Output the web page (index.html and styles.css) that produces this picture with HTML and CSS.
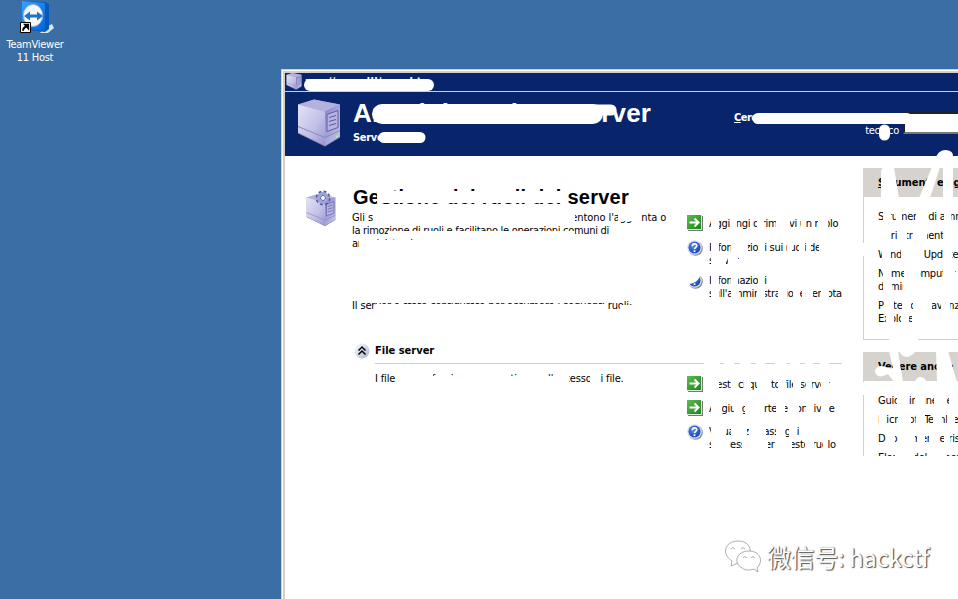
FILE: index.html
```html
<!DOCTYPE html>
<html lang="it">
<head>
<meta charset="utf-8">
<title>Amministrazione server</title>
<link rel="stylesheet" href="styles.css">
</head>
<body>
<svg class="defs" width="0" height="0">
  <defs>
    <linearGradient id="front" x1="0" y1="0" x2="1" y2="1"><stop stop-color="#e4e3f6"/><stop offset=".6" stop-color="#c0bfe6"/><stop offset="1" stop-color="#9795d0"/></linearGradient>
    <linearGradient id="side" x1="0" y1="0" x2="1" y2="1"><stop stop-color="#8583d2"/><stop offset="1" stop-color="#c9c8e6"/></linearGradient>
    <linearGradient id="green" x1="0" y1="0" x2="1" y2="1"><stop stop-color="#61ba57"/><stop offset="1" stop-color="#11840f"/></linearGradient>
    <radialGradient id="blue" cx=".4" cy=".35" r=".65"><stop stop-color="#5a8cf0"/><stop offset="1" stop-color="#1645b5"/></radialGradient>
    <linearGradient id="tv" x1="0" y1="0" x2="1" y2="1"><stop stop-color="#36a2ff"/><stop offset="1" stop-color="#0065da"/></linearGradient>
    <linearGradient id="round" x1="0" y1="0" x2="1" y2="1"><stop stop-color="#fff"/><stop offset="1" stop-color="#a9b4d6"/></linearGradient>
    <symbol id="tower" viewBox="0 0 44 48">
      <path d="M1 5 17 0 43 5 43 38 28 47 1 34z" fill="#8c8ab4"/>
      <path d="M1 5 17 0 43 5 28 12z" fill="#b3b1df"/>
      <path d="M1 5 28 12 28 46 1 33z" fill="url(#front)"/>
      <path d="M28 12 43 5 43 37 28 46z" fill="url(#side)"/>
      <path d="M1 27 28 38 43 31" fill="none" stroke="#8b89b8"/>
      <path d="M30 15 41 11V28L30 32z" fill="#b4b3e1" stroke="#5e5e9f"/>
      <path d="M32 18 39 16M32 22 39 20M32 26 39 24" stroke="#5b5ba0"/>
      <path d="M39 36h2v2h-2z" fill="#8fff77"/>
    </symbol>
    <symbol id="go" viewBox="0 0 16 16">
      <path d="M1 1h15v15H1z" fill="#777"/><path d="M0 0h15v15H0z" fill="url(#green)"/><path d="M14.5 0v14.5H0" fill="none" stroke="#dfe9dc"/>
      <path d="M2.5 7.5h9M7.5 3.5l4 4-4 4" fill="none" stroke="#fff" stroke-width="2"/>
    </symbol>
    <symbol id="help" viewBox="0 0 16 16">
      <circle cx="8.5" cy="8.5" r="7.3" fill="#88898f"/><circle cx="7.5" cy="7.5" r="7.3" fill="#d7e1f5"/><circle cx="7.5" cy="7.5" r="6" fill="url(#blue)"/>
      <path d="M5.3 6.2C5.3 3 10 3.2 9.8 5.8 9.7 7.4 7.6 7.3 7.5 9.1" fill="none" stroke="#fff" stroke-width="1.7"/><path d="M6.6 10.3h1.8v1.8H6.6z" fill="#fff"/>
    </symbol>
  </defs>
</svg>
<div class="desktop">
  <div class="shortcut">
    <svg width="34" height="34" viewBox="0 0 34 34">
      <path d="M24 28 32 24 34 28 28 33 20 33z" fill="#dce4ee"/>
      <path d="M2 2 5 1 25 2 29 4V29L25 32 2 29z" fill="#0658bd"/>
      <path d="M2 1 25 3V31L2 28z" fill="url(#tv)"/>
      <ellipse cx="13" cy="15.5" rx="9.7" ry="11" fill="#f4f8fc" stroke="#9bb7ce"/>
      <path d="M4 16 10 11.5V14.5H17V11.5L23 16 17 20.5V17.5H10V20.5z" fill="#1f72c7"/>
      <path d="M.5 22.500h10v10H.5z" fill="#fff" stroke="#000"/>
      <path d="M3 31C2.500 28 4 26.500 7 26.500M4.500 24.500H8.500V29z" fill="#000" stroke="#000" stroke-width="1.300"/>
    </svg>
    <span>TeamViewer<br>11 Host</span>
  </div>

  <main class="window">
    <div class="titlebar"><svg width="16" height="17"><use href="#tower"/></svg><span>res://mys.dll/mys.hta</span></div>
    <header class="banner">
      <svg width="44" height="49"><use href="#tower"/></svg>
      <div class="heading"><h1>Amministrazione server</h1><p>Server: PC1</p></div>
      <div class="search"><label><b><u>C</u>erca in Guida in linea e supporto</b>tecnico</label><input></div>
    </header>
    <div class="content">
      <section class="roles">
        <svg class="roles-icon" width="32" height="38" viewBox="0 0 32 38">
          <svg y="3" width="30" height="35" preserveAspectRatio="none"><use href="#tower"/></svg>
          <circle cx="17" cy="8" r="5" fill="none" stroke="#555d9d" stroke-width="5" stroke-dasharray="2.2 1.7"/><circle cx="17" cy="8" r="4.500" fill="#f4f4ff" stroke="#9ba3dc" stroke-width="3"/><circle cx="17" cy="8" r="2.500" fill="#fff" stroke="#565e9c"/>
        </svg>
        <div class="roles-text">
          <h2>Gestione dei ruoli del server</h2>
          <p class="l1">Gli strumenti e le informazioni seguenti consentono l'aggiunta o</p>
          <p class="l2">la rimozione di ruoli e facilitano le operazioni comuni di</p>
          <p>amministrazione.</p>
          <p class="configured">Il server è stato configurato per assumere i seguenti ruoli:</p>
        </div>
        <ul class="links">
          <li><svg><use href="#go"/></svg><span>Aggiungi o rimuovi un ruolo</span></li>
          <li class="two"><svg><use href="#help"/></svg><span>Informazioni sui ruoli del<br>server</span></li>
          <li class="two last"><svg><use href="#help"/></svg><span>Informazioni<br>sull'amministrazione remota</span></li>
        </ul>
      </section>
      <section class="file">
        <h3><svg width="16" height="16"><circle cx="8" cy="8" r="7.500" fill="url(#round)"/><path d="M4.500 7.500 8 4l3.500 3.500M4.500 11.500 8 8l3.500 3.500" fill="none" stroke="#000" stroke-width="1.500"/></svg><span>File server</span></h3>
        <div class="file-body">
          <p>I file server forniscono e gestiscono l'accesso ai file.</p>
          <ul class="links">
            <li><svg><use href="#go"/></svg><span>Gestisci questo file server</span></li>
            <li><svg><use href="#go"/></svg><span>Aggiungi cartelle condivise</span></li>
            <li class="two"><svg><use href="#help"/></svg><span>Visualizza passaggi<br>successivi per questo ruolo</span></li>
          </ul>
        </div>
      </section>
      <aside class="side">
        <section class="panel tools">
          <h4><u>S</u>trumenti e aggiornamenti</h4>
          <ul><li>Strumenti di amministrazione</li><li>Altri strumenti</li><li>Windows Update</li><li>Nome computer e<br>dominio</li><li>Protezione avanzata<br>Explorer</li></ul>
        </section>
        <section class="panel also">
          <h4><u>V</u>edere anche</h4>
          <ul><li>Guida in linea e</li><li>Microsoft TechNet</li><li>Deployment e risorse</li><li>Elenco delle operazioni</li></ul>
        </section>
      </aside>
    </div>
  </main>

  <!-- White brush strokes painted over the window -->
  <svg class="brush" width="958" height="599" viewBox="0 0 958 599">
    <g class="halo">
      <path stroke-width="12" d="M310 85H428"/><path stroke-width="11" d="M384 137.500H420"/>
      <path stroke-width="20" d="M382 114H593"/><path stroke-width="11" d="M590 110H611"/>
      <path stroke-width="11" d="M758 118.500H907"/><path stroke-width="11" d="M884.500 130V135"/>
    </g>
    <g class="rows">
      <path d="M711 223H719M730 223H737M757 223H764M776 223H790M801 223H806M812 223H815M818 223H828"/>
      <path d="M711 247H719M731 247H748M758 247H765M787 247H792M799 247H805M807 247H811M819 247H833"/>
      <path d="M711 262H726M728 262H738M740 262H760"/>
      <path d="M711 279H719M731 279H738M758 279H764"/>
      <path d="M711 293H719M731 293H739M757 293H765M778 293H787M793 293H800M802 293H805M808 293H813M821 293H829"/>
      <path d="M704 364H720M724 364H734M740 364H751M756 364H765M775 364H787M790 364H800M805 364H813M820 364H829"/>
      <path d="M706 384H719M731 384H738M744 384H751M757 384H771M778 384H786M793 384H801M806 384H812M821 384H829"/>
      <path d="M711 408H722M734 408H742M745 408H764M776 408H785M788 408H799M806 408H814M821 408H829"/>
      <path d="M711 432H726M731 432H747M749 432H766M776 432H785M789 432H797M805 432H820"/>
      <path d="M711 445H730M742 445H768M776 445H792M805 445H814M823 445H828"/>
      <path d="M883 216H891M896 216H902M916 216H927M944 216H951"/>
      <path d="M876 235H891M897 235H907M913 235H927M943 235H951"/>
      <path d="M882 254H891M901 254H923M943 254H952"/>
      <path d="M883 272H891M904 272H920M943 272H955"/>
      <path d="M883 286H892M903 286H925"/>
      <path d="M884 304H894M902 304H911M913 304H932M941 304H950"/>
      <path d="M886 318H894M901 318H909M912 318H930"/>
      <path d="M897 400H908M915 400H925M934 400H944M949 400H958"/>
      <path d="M879 419H886M898 419H911M916 419H925M933 419H942M947 419H955"/>
      <path d="M886 438H895M898 438H915M917 438H925M929 438H939M944 438H950"/>
      <path d="M895 454H915M928 454H936M939 454H947"/>
    </g>
    <g class="solid">
      <path d="M377 191H562V203H377zM373 209H575V223H373zM618 209H641V221H618zM388 231H575V238H388zM359 240H450V252H359z"/>
      <path d="M376 297H606V303H376zM376 304H606V313H376zM622 305H635V312H618z"/>
      <path d="M397 376H568V386H397zM397 370H433V386H397zM457 370H510V386H457zM520 370H547V386H520zM555 370H569V386H555zM590 370H600V386H590z"/>
      <path d="M686 272H706L703 277 700 276Q698 282 690 284L687 286z"/>
      <path d="M881 198V172Q881 167 887 167H894L899 198zM919 198 932 167 937 155Q940 150 946 150 954 151 953 157V198H943V167H940L930 198z"/>
      <path d="M862 243H866V256H862zM862 382H866V395H862z"/>
      <path d="M889 351H898L903 382H894L888 374Q876 380 875 371 877 364 886 367 891 369 893 368z"/>
      <path d="M899 351H916Q911 357 906 357 901 356 899 351zM915 382Q916 377 921 377 926 378 926 382zM936 351H948L957 382H937zM889 338H918V341H889z"/>
    </g>
  </svg>

  <div class="watermark">
    <svg width="38" height="34" viewBox="0 0 38 34" fill="#fff" stroke="#999" stroke-width=".8">
      <path d="M14 23 7 26 8 21C-4 13 2 1 14 1 23 1 27 7 26 12"/>
      <path d="M25 11C12 11 9 23 18 28 22 31 27 30 30 29L34 32 33 28C40 21 36 11 25 11z"/>
      <path d="M7 9q2-3 4 0M17 9q2-3 4 0M19 18q2-3 4 0M27 18q2-3 4 0" fill="none"/>
    </svg>
    <span>微信号: <i>hackctf</i></span>
  </div>
</div>
</body>
</html>
```
FILE: styles.css
```css
* { box-sizing: border-box; }
body { margin: 0; font: 11px/13px "DejaVu Sans Condensed", "DejaVu Sans", sans-serif; font-stretch: condensed; letter-spacing: -0.3px; color: #000; }
h1, h2, h3, h4, p, ul { margin: 0; padding: 0; }
ul { list-style: none; }
svg { display: block; flex: none; }
.defs { position: absolute; }
.desktop { position: relative; display: grid; grid-template-columns: 281px 677px; width: 958px; height: 599px; overflow: hidden; background: #3a6ea5; white-space: nowrap; }
.shortcut { width: 70px; display: flex; flex-direction: column; align-items: center; gap: 4px; color: #fff; text-align: center; letter-spacing: -0.25px; }
.shortcut svg { margin-left: 3px; }
.window { margin-top: 69px; height: 530px; border-left: 1px solid #d4d0c8; border-top: 1px solid #d4d0c8; box-shadow: inset 1px 1px #fff, inset 3px 3px #d4d0c8; padding: 3px 0 0 3px; background: #fff; overflow: hidden; }
.titlebar { display: flex; gap: 3px; height: 19px; padding: 0 1px; background: #08246b; border-bottom: 1px solid #d4d0c8; color: #fff; font-weight: bold; align-items: flex-start; letter-spacing: 0.3px; }
.titlebar span { padding-top: 2px; }
.banner { display: flex; height: 64px; background: #08246b; color: #fff; padding: 7px 0 0 12px; }
.heading { flex: none; width: 380px; padding-left: 12px; }
h1 { font: bold 26px/28px "Liberation Sans", sans-serif; letter-spacing: 0.15px; }
.heading p { font-weight: bold; padding-top: 4px; }
.search { display: flex; flex: none; width: 290px; padding-top: 12px; }
.search label { flex: none; width: 182px; text-align: right; padding-right: 4px; }
.search label b { display: block; height: 13px; margin-left: 13px; text-align: left; letter-spacing: -0.5px; }
.search input { flex: none; width: 100px; height: 22px; margin-top: 1px; border: 2px inset #777; background: #fff; border-radius: 0; }
.content { display: grid; grid-template-columns: 578px 110px; grid-template-rows: 187px 113px; height: 300px; overflow: hidden; }
.roles { display: grid; grid-template-columns: 20px 47px 335px 176px; }
.roles-icon { grid-column: 2; margin: 34px 0 0 1px; }
.roles-text { padding-top: 29px; }
h2 { font: bold 20px/24px "Liberation Sans", sans-serif; height: 26px; letter-spacing: 0.24px; margin-left: 1px; }
.l1 { letter-spacing: -0.06px; }
.configured { padding-top: 49px; letter-spacing: -0.14px; }
.links svg { width: 16px; height: 16px; }
.links li { display: flex; gap: 6px; height: 24px; }
.links li span { padding-top: 2px; }
.roles .links { padding-top: 59px; }
.roles .links li:first-child { height: 25px; }
.links .two { height: 33px; }
.links .two span { padding-top: 1px; }
.file { grid-column: 1; padding-left: 69px; }
h3 { display: flex; gap: 5px; font-size: 11px; line-height: 13px; height: 20px; letter-spacing: 0; }
h3 span { width: 467px; height: 21px; padding-top: 1px; border-bottom: 1px solid #d4d0c8; }
.file-body { display: grid; grid-template-columns: 333px 176px; }
.file-body p { padding: 9px 0 0 21px; letter-spacing: -0.15px; }
.file-body .links { padding-top: 13px; }
.side { grid-column: 2; grid-row: 1 / 3; padding-top: 12px; }
.panel { border: 1px solid #d4d0c8; border-width: 0 0 1px 1px; margin-bottom: 12px; height: 172px; }
h4 { height: 29px; margin-left: -1px; padding: 8px 0 0 15px; background: #d6d3ce; font-size: 11px; line-height: 14px; letter-spacing: -0.05px; }
.panel ul { padding: 13px 0 0 14px; letter-spacing: -0.2px; }
.panel li { margin-bottom: 6px; }
.brush { position: absolute; inset: 0; fill: none; stroke: #fff; }
.halo { stroke-linecap: round; }
.rows { stroke-width: 14; }
.solid { fill: #fff; stroke: none; }
.watermark { position: absolute; left: 724px; top: 540px; display: flex; gap: 5px; color: #fff; font: 24px/34px "Noto Sans CJK SC", sans-serif; text-shadow: 1px 1px 1px #555, 1px 0 1px #777; letter-spacing: -0.4px; }
.watermark i { font-style: normal; letter-spacing: -0.3px; }
```
